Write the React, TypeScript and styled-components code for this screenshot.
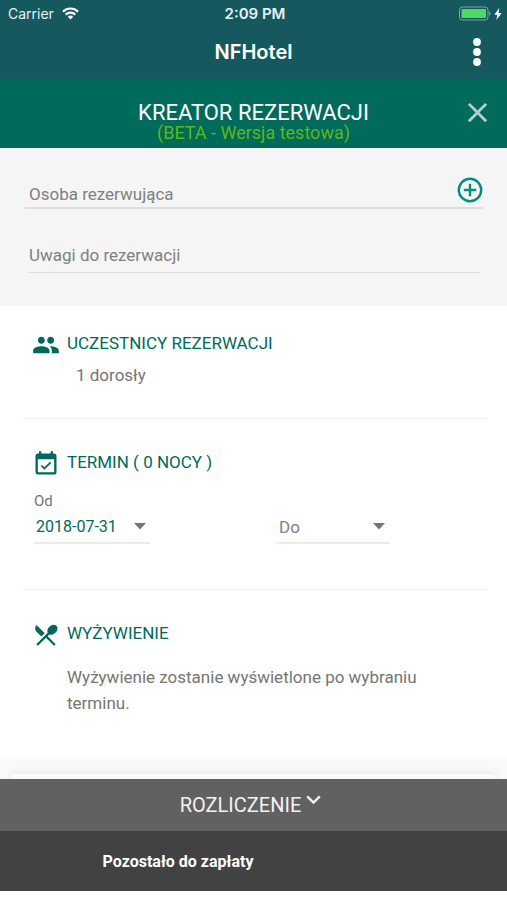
import React from "react";
import styled, { createGlobalStyle } from "styled-components";
import { MdClose, MdEventAvailable, MdPeople, MdRestaurantMenu } from "react-icons/md";

const colors = {
  bar: "#15595f",
  header: "#006a5b",
  accent: "#00695c",
  add: "#009081",
  beta: "#5cb917",
  text: "#757575",
  line: "#dedede",
};

const GlobalStyle = createGlobalStyle`
  *, *::before, *::after { box-sizing: border-box; }
  body {
    margin: 0;
    background: #fff;
    color: ${colors.text};
    font-family: Roboto, "Liberation Sans", sans-serif;
    font-size: 17px;
  }
  h1, h2, p { margin: 0; font-weight: 400; }
  button, input, select { font: inherit; color: inherit; }
`;

const Screen = styled.div`
  display: flex;
  flex-direction: column;
  min-height: 100vh;
`;

const StatusBar = styled.div`
  display: grid;
  grid-template-columns: 1fr auto 1fr;
  align-items: center;
  height: 27px;
  padding: 0 5px 0 8px;
  background: ${colors.bar};
  color: #e6f1f2;
  font-family: Inter, Roboto, sans-serif;
  font-size: 14px;
`;

const StatusGroup = styled.div<{ $end?: boolean }>`
  display: flex;
  align-items: center;
  justify-content: ${(p) => (p.$end ? "flex-end" : "flex-start")};
  gap: ${(p) => (p.$end ? "3px" : "8px")};
`;

const Clock = styled.span`
  font-size: 15px;
  font-weight: 600;
  line-height: 20px;
`;

const NavBar = styled.header`
  display: grid;
  grid-template-columns: 44px 1fr 44px;
  align-items: center;
  height: 52px;
  padding: 0 8px 2px;
  background: ${colors.bar};
`;

const AppTitle = styled.p`
  grid-column: 2;
  color: #fff;
  font-family: Inter, Roboto, sans-serif;
  font-size: 20px;
  font-weight: 600;
  line-height: 24px;
  text-align: center;
`;

const IconButton = styled.button<{ $color: string }>`
  display: flex;
  align-items: center;
  justify-content: center;
  padding: 0;
  border: 0;
  background: none;
  color: ${(p) => p.$color};
  cursor: pointer;
`;

const WizardHeader = styled.div`
  display: grid;
  grid-template-columns: 44px 1fr 44px;
  align-items: center;
  height: 69px;
  padding: 0 8px 2px;
  background: ${colors.header};
`;

const WizardTitle = styled.h1`
  grid-column: 2;
  padding-top: 18px;
  color: #fff;
  font-size: 22px;
  line-height: 22px;
  text-align: center;
`;

const Beta = styled.span`
  display: block;
  color: ${colors.beta};
  font-size: 18px;
  line-height: 18px;
`;

const FormPanel = styled.form`
  display: flex;
  flex-direction: column;
  gap: 24px;
  padding: 21px 24px 33px 25px;
  background: #f5f5f5;
`;

const Field = styled.div<{ $inset?: boolean }>`
  display: flex;
  align-items: center;
  height: 40px;
  margin: ${(p) => (p.$inset ? "0 3px" : "0")};
  padding: ${(p) => (p.$inset ? "0 0 4px 1px" : "4px 0 0 4px")};
  border-bottom: ${(p) => (p.$inset ? "1px" : "2px")} solid ${colors.line};
`;

const TextInput = styled.input`
  flex: 1;
  min-width: 0;
  padding: 8px 0 0;
  border: 0;
  outline: 0;
  background: none;
  line-height: 24px;
  &::placeholder {
    color: #808080;
    opacity: 1;
  }
`;

const Section = styled.section<{ $first?: boolean; $last?: boolean }>`
  margin: 0 19px 0 20px;
  padding: ${(p) => (p.$first ? "21px" : "27px")} 0 ${(p) => (p.$last ? "43px" : "31px")} 12px;
  border-bottom: ${(p) => (p.$last ? "0" : "1px solid #f2f2f2")};
`;

const SectionHeading = styled.h2`
  display: flex;
  align-items: center;
  gap: 7px;
  color: ${colors.accent};
  font-size: 17px;
  line-height: 24px;
  svg {
    width: 28px;
    height: 28px;
    margin-top: 4px;
  }
`;

const Guests = styled.p`
  padding: 4px 0 0 44px;
  line-height: 24px;
`;

const Meals = styled.p`
  padding: 15px 50px 0 35px;
  line-height: 26px;
`;

const DateGrid = styled.div`
  display: grid;
  grid-template-columns: 1fr 1fr;
  gap: 32px;
  padding: 13px 0 14px 2px;
`;

const DateField = styled.div<{ $narrow?: boolean }>`
  display: flex;
  flex-direction: column;
  justify-content: flex-end;
  width: ${(p) => (p.$narrow ? "112px" : "116px")};
`;

const DateLabel = styled.label`
  font-size: 15px;
  line-height: 20px;
`;

const SelectWrap = styled.div`
  display: grid;
  grid-template-columns: 1fr 12px;
  align-items: center;
  padding-right: 4px;
  border-bottom: 2px solid #ebebeb;
  svg {
    grid-area: 1 / 2;
    pointer-events: none;
  }
`;

const DateSelect = styled.select<{ $filled?: boolean }>`
  grid-area: 1 / 1 / 2 / 3;
  width: 100%;
  height: 31px;
  padding: 0 0 0 2px;
  border: 0;
  outline: 0;
  appearance: none;
  background: none;
  color: ${(p) => (p.$filled ? colors.accent : "#808080")};
  font-size: ${(p) => (p.$filled ? "16px" : "17px")};
`;

const NextCardEdge = styled.div`
  height: 20px;
  padding: 15px 12px 0;
  background: #f9f9f9;
  overflow: hidden;
  &::before {
    content: "";
    display: block;
    height: 8px;
    background: #fbfbfb;
    box-shadow: 0 0 8px rgba(0, 0, 0, 0.1);
  }
`;

const SummaryToggle = styled.button`
  display: flex;
  align-items: center;
  justify-content: center;
  gap: 5px;
  width: 100%;
  height: 52px;
  padding: 0 6px 0 0;
  border: 0;
  background: #616161;
  color: #f2f2f2;
  font-size: 20px;
  line-height: 24px;
  cursor: pointer;
  svg {
    margin-bottom: 10px;
  }
`;

const SummaryGrid = styled.div`
  display: grid;
  grid-template-columns: 1fr 1fr;
  align-items: center;
  height: 60px;
  margin-bottom: 10px;
  background: #424242;
  color: #fff;
  font-size: 16px;
  font-weight: 700;
  text-align: right;
`;

const WifiIcon = () => (
  <svg width="17" height="13" viewBox="0 0 17 13" fill="none" stroke="#fff" strokeWidth="2.2" aria-hidden="true">
    <path d="M1 4.6a10.6 10.6 0 0 1 15 0M3.7 7.6a6.8 6.8 0 0 1 9.6 0" />
    <path d="M8.5 12.6 5.8 9.8a3.8 3.8 0 0 1 5.4 0z" fill="#fff" stroke="none" />
  </svg>
);

const BatteryIcon = () => (
  <svg width="32" height="15" viewBox="0 0 32 15" aria-hidden="true">
    <rect x="0.5" y="1" width="28.5" height="13" rx="3" fill="none" stroke="#7fa1a5" />
    <rect x="2.5" y="3" width="24.5" height="9" rx="1" fill="#4cd964" />
    <path d="M30.3 5.3c1.8.8 1.8 3.6 0 4.4z" fill="#7fa1a5" />
  </svg>
);

const BoltIcon = () => (
  <svg width="8" height="12" viewBox="0 0 8 12" fill="#fff" aria-hidden="true">
    <path d="M5.3 0 .3 6.7h3L2.4 12l5.3-7H4.5z" />
  </svg>
);

const DotsIcon = () => (
  <svg width="10" height="28" viewBox="0 0 10 28" fill="currentColor" aria-hidden="true">
    <circle cx="5" cy="4" r="3.9" />
    <circle cx="5" cy="14" r="3.9" />
    <circle cx="5" cy="24" r="3.9" />
  </svg>
);

const AddIcon = () => (
  <svg width="26" height="26" viewBox="0 0 26 26" fill="none" stroke="currentColor" strokeWidth="2.4" aria-hidden="true">
    <circle cx="13" cy="13" r="11.2" />
    <path d="M13 6.8v12.4M6.8 13h12.4" />
  </svg>
);

const CaretIcon = () => (
  <svg width="12" height="7" viewBox="0 0 12 7" fill="#757575" aria-hidden="true">
    <path d="M0 0h12L6 6.5z" />
  </svg>
);

const ChevronIcon = () => (
  <svg width="15" height="10" viewBox="0 0 15 10" fill="none" stroke="currentColor" strokeWidth="2.4" aria-hidden="true">
    <path d="m1.2 1.4 6.3 6.2 6.3-6.2" />
  </svg>
);

export default function App() {
  return (
    <Screen>
      <GlobalStyle />
      <StatusBar>
        <StatusGroup>
          <span>Carrier</span>
          <WifiIcon />
        </StatusGroup>
        <Clock>2:09 PM</Clock>
        <StatusGroup $end>
          <BatteryIcon />
          <BoltIcon />
        </StatusGroup>
      </StatusBar>
      <NavBar>
        <AppTitle>NFHotel</AppTitle>
        <IconButton type="button" $color="#fff" aria-label="Menu">
          <DotsIcon />
        </IconButton>
      </NavBar>
      <main>
        <WizardHeader>
          <WizardTitle>
            KREATOR REZERWACJI
            <Beta>(BETA - Wersja testowa)</Beta>
          </WizardTitle>
          <IconButton type="button" $color="#b3d2ce" aria-label="Zamknij">
            <MdClose size={33} />
          </IconButton>
        </WizardHeader>
        <FormPanel>
          <Field>
            <TextInput type="text" placeholder="Osoba rezerwująca" aria-label="Osoba rezerwująca" />
            <IconButton type="button" $color={colors.add} aria-label="Dodaj osobę">
              <AddIcon />
            </IconButton>
          </Field>
          <Field $inset>
            <TextInput type="text" placeholder="Uwagi do rezerwacji" aria-label="Uwagi do rezerwacji" />
          </Field>
        </FormPanel>
        <Section $first>
          <SectionHeading>
            <MdPeople />
            UCZESTNICY REZERWACJI
          </SectionHeading>
          <Guests>1 dorosły</Guests>
        </Section>
        <Section>
          <SectionHeading>
            <MdEventAvailable />
            TERMIN ( 0 NOCY )
          </SectionHeading>
          <DateGrid>
            <DateField>
              <DateLabel htmlFor="from">Od</DateLabel>
              <SelectWrap>
                <DateSelect id="from" $filled defaultValue="2018-07-31">
                  <option>2018-07-31</option>
                </DateSelect>
                <CaretIcon />
              </SelectWrap>
            </DateField>
            <DateField $narrow>
              <SelectWrap>
                <DateSelect aria-label="Do" defaultValue="Do">
                  <option>Do</option>
                </DateSelect>
                <CaretIcon />
              </SelectWrap>
            </DateField>
          </DateGrid>
        </Section>
        <Section $last>
          <SectionHeading>
            <MdRestaurantMenu />
            WYŻYWIENIE
          </SectionHeading>
          <Meals>Wyżywienie zostanie wyświetlone po wybraniu terminu.</Meals>
        </Section>
        <NextCardEdge />
      </main>
      <footer>
        <SummaryToggle type="button" aria-expanded="true">
          ROZLICZENIE
          <ChevronIcon />
        </SummaryToggle>
        <SummaryGrid>
          <span>Pozostało do zapłaty</span>
        </SummaryGrid>
      </footer>
    </Screen>
  );
}
